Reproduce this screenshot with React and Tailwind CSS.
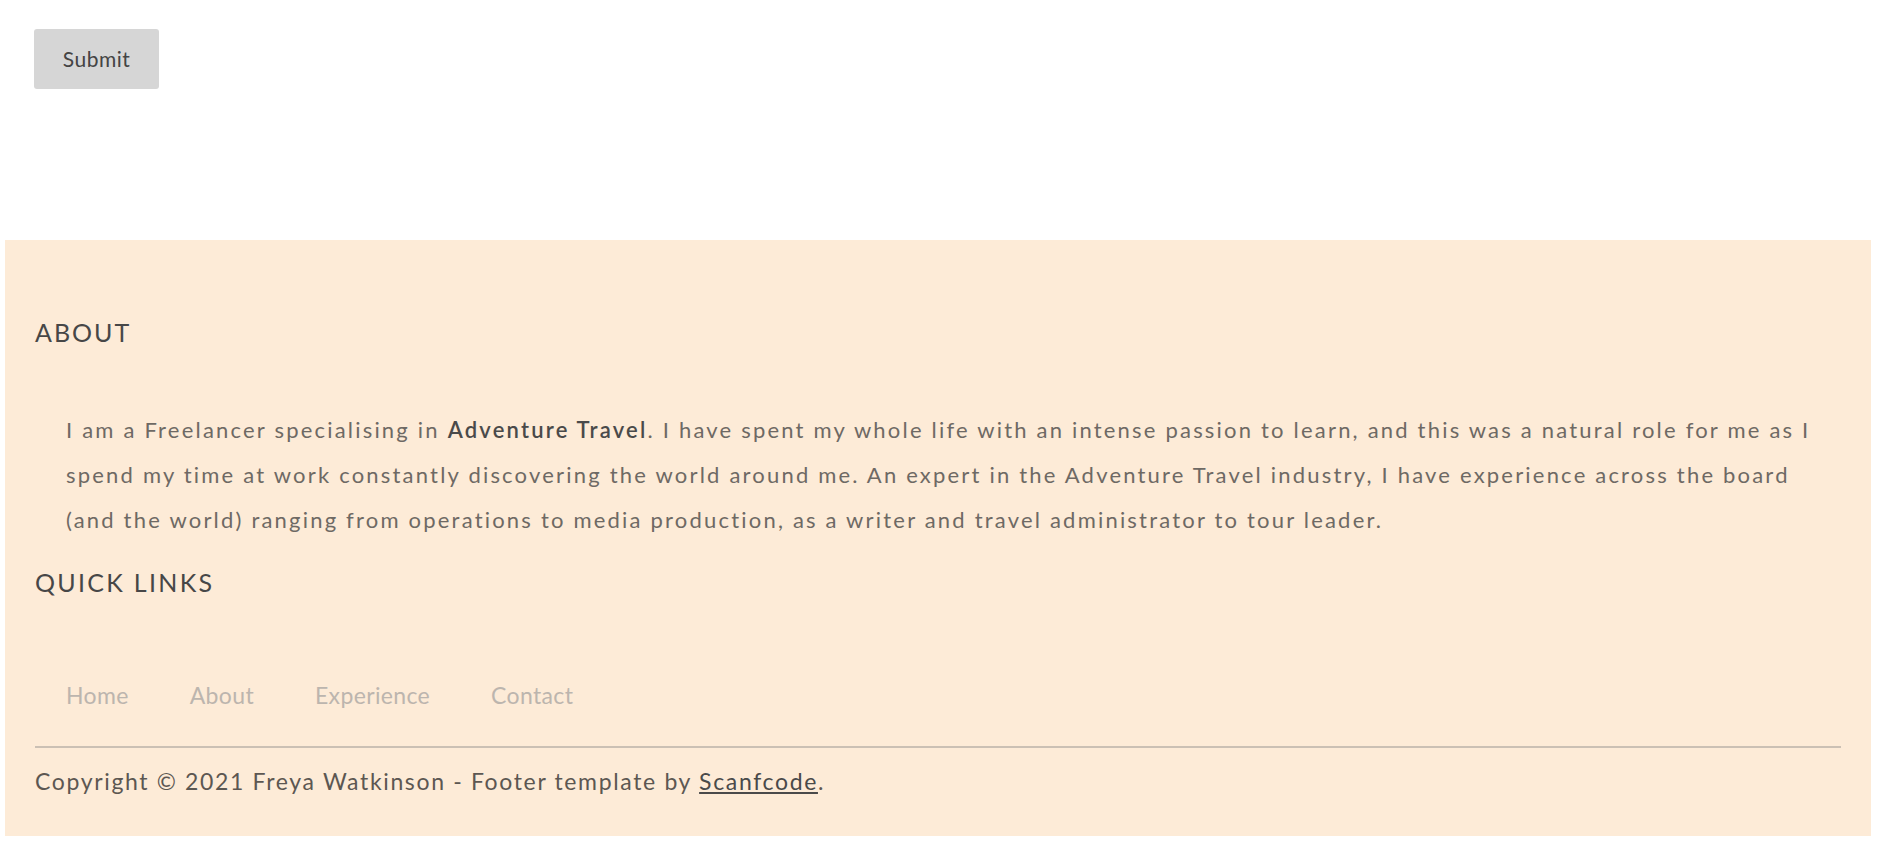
import React from "react";

const links = ["Home", "About", "Experience", "Contact"];

const App = () => {
  return (
    <div className="min-h-screen bg-white font-['Lato','Noto_Sans',sans-serif]">
      {/* form action */}
      <div className="pt-[29px] pl-[34px]">
        <button className="w-[125px] h-[60px] rounded-[3px] bg-[#d6d6d6] text-[21px] tracking-[0.5px] text-[#444]">
          Submit
        </button>
      </div>

      {/* footer */}
      <footer className="mt-[151px] ml-[5px] mr-[8px] bg-[#fdebd7] px-[30px] pt-[77px] pb-[40px]">
        <h3 className="text-[25px] leading-[30px] tracking-[2px] text-[#474747]">
          ABOUT
        </h3>
        <p className="mt-[60px] ml-[31px] text-[22px] leading-[45px] tracking-[2.2px] text-[#6e6964]">
          I am a Freelancer specialising in{" "}
          <span className="font-semibold text-[#4a4a4a]">Adventure Travel</span>.
          I have spent my whole life with an intense passion to learn, and this
          was a natural role for me as I spend my time at work constantly
          discovering the world around me. An expert in the Adventure Travel
          industry, I have experience across the board (and the world) ranging
          from operations to media production, as a writer and travel
          administrator to tour leader.
        </p>

        <h3 className="mt-[25px] text-[25px] leading-[30px] tracking-[2.3px] text-[#474747]">
          QUICK LINKS
        </h3>
        <ul className="mt-[83px] flex gap-[61px] pl-[31px]">
          {links.map((l) => (
            <li key={l}>
              <a href="#" className="text-[23px] leading-[30px] tracking-[0.35px] text-[#bcb5ae]">
                {l}
              </a>
            </li>
          ))}
        </ul>

        <hr className="mt-[36px] border-0 border-t-2 border-[#cbc0b4]" />

        <p className="mt-[18px] text-[23px] leading-[30px] tracking-[1.65px] text-[#5c5752]">
          Copyright © 2021 Freya Watkinson - Footer template by{" "}
          <a href="#" className="underline text-[#4a4a4a]">
            Scanfcode
          </a>
          .
        </p>
      </footer>
    </div>
  );
};

export default App;
